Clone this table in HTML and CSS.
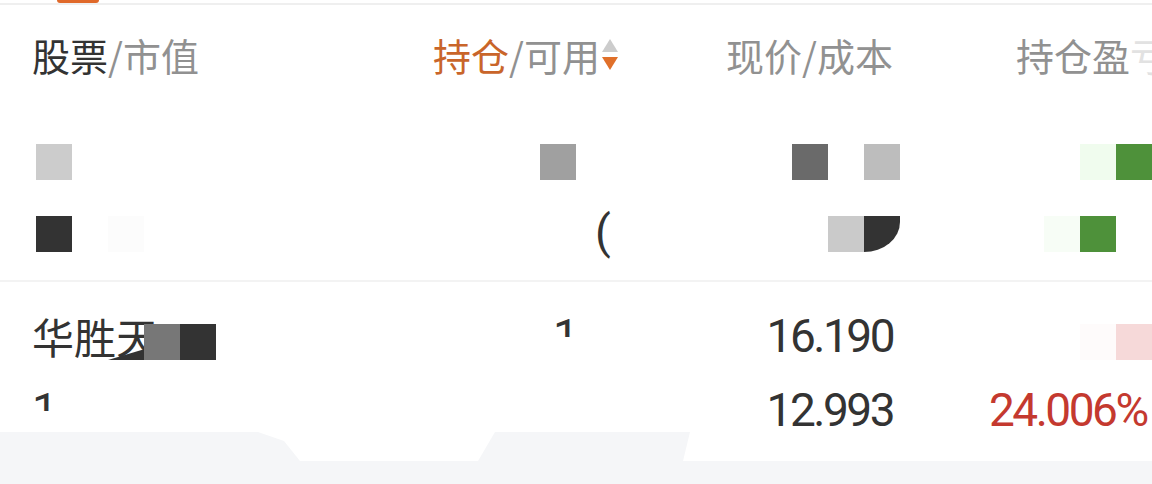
FILE: index.html
```html
<!DOCTYPE html>
<html lang="zh-CN">
<head>
<meta charset="utf-8">
<title>持仓</title>
<link rel="stylesheet" href="styles.css">
</head>
<body>
<div class="page">
  <div class="topbar"><span class="tab-ind"></span></div>
  <div class="table">
    <div class="grid head">
      <div class="c1"><span class="dark">股票</span>/市值</div>
      <div class="c2"><span class="active">持仓</span>/可用<span class="sort"><i class="up"></i><i class="down"></i></span></div>
      <div class="c3">现价/成本</div>
      <div class="c4">持仓盈<span class="fade">亏</span></div>
    </div>
    <div class="grid row first">
      <div class="c1"><div class="ln"></div><div class="ln"></div></div>
      <div class="c2"><div class="ln"></div><div class="ln num frag-paren">(</div></div>
      <div class="c3"><div class="ln"></div><div class="ln"></div></div>
      <div class="c4"><div class="ln"></div><div class="ln"></div></div>
    </div>
    <div class="grid row">
      <div class="c1"><div class="ln name">华胜天</div><div class="ln num"><span class="frag">1</span></div></div>
      <div class="c2"><div class="ln num frag-one"><span class="frag">1</span></div><div class="ln"></div></div>
      <div class="c3"><div class="ln num">16.190</div><div class="ln num">12.993</div></div>
      <div class="c4"><div class="ln"></div><div class="ln num red">24.006%</div></div>
    </div>
  </div>
  <div class="footer"></div>

  <div class="mosaic" aria-hidden="true">
    <span class="m a1"></span>
    <span class="m a2"></span>
    <span class="m a3"></span>
    <span class="m a4"></span>
    <span class="m a5"></span>
    <span class="m a6"></span>
    <span class="m b1"></span>
    <span class="m b2"></span>
    <span class="m b3"></span>
    <span class="m b4"></span>
    <span class="m b5"></span>
    <span class="m b6"></span>
    <span class="m c0"></span>
    <span class="m c1m"></span>
    <span class="m c2m"></span>
    <span class="m c3m"></span>
    <span class="m c4m"></span>
  </div>
</div>
</body>
</html>
```

FILE: styles.css
```css
* { box-sizing: border-box; margin: 0; padding: 0; }

html, body {
  width: 1152px;
  height: 484px;
  overflow: hidden;
  background: #ffffff;
}

body {
  font-family: "Noto Sans CJK SC", "Noto Sans", sans-serif;
  color: #333333;
}

.page {
  position: relative;
  width: 1152px;
  height: 484px;
  overflow: hidden;
}

.topbar {
  height: 5px;
  border-bottom: 2px solid #efefef;
}

.tab-ind {
  display: block;
  margin-left: 57px;
  width: 42px;
  height: 3px;
  background: #e0692a;
  border-radius: 0 0 3px 3px;
}

.table {
  width: 1240px;
}

.grid {
  display: grid;
  grid-template-columns: 401px 200px 260px 1fr;
  padding-left: 32px;
}

.head {
  height: 99px;
  align-items: center;
  font-size: 38px;
  color: #919191;
  line-height: 1;
}

.head .dark { color: #333333; }
.head .active { color: #c9652a; }
.head .c2 { display: flex; align-items: center; }
.head .c3 { text-align: right; }
.head .c4 { padding-left: 123px; }
.head .fade { color: #e2e2e2; }

.sort {
  display: inline-flex;
  flex-direction: column;
  gap: 5px;
  margin-left: 2px;
}
.sort i {
  display: block;
  width: 0;
  height: 0;
  border-left: 8px solid transparent;
  border-right: 8px solid transparent;
}
.sort .up { border-bottom: 13px solid #cccccc; }
.sort .down { border-top: 13px solid #e0702a; }

.row {
  padding: 17px 0 11px 32px;
  font-size: 42px;
  line-height: 74px;
}
.row.first {
  border-bottom: 2px solid #f3f3f3;
}

.ln { height: 74px; white-space: nowrap; }

.num {
  font-family: Roboto, "Noto Sans", sans-serif;
  font-size: 46px;
  letter-spacing: -2.5px;
}

.frag {
  display: inline-block;
  height: 38px;
  overflow: hidden;
  vertical-align: top;
}

.c3 .ln { text-align: right; }
.c4 { padding-left: 96px; }
.red { color: #c4392f; }

.frag-paren { padding-left: 162px; }
.frag-one { padding-left: 120px; }

.footer {
  position: relative;
  margin-top: 3px;
  height: 23px;
  background: #f5f6f8;
}
.footer::before,
.footer::after {
  content: "";
  position: absolute;
  top: -29px;
  height: 29px;
  background: #f5f6f8;
}
.footer::before {
  left: 0;
  width: 300px;
  clip-path: polygon(0 0, 258px 0, 284px 9px, 300px 29px, 0 29px);
}
.footer::after {
  left: 478px;
  width: 212px;
  clip-path: polygon(17px 0, 212px 0, 205px 29px, 0 29px);
}

/* redaction mosaic laid over the table on a 36px grid */
.mosaic {
  position: absolute;
  top: 0;
  left: 0;
  display: grid;
  grid-template-columns: repeat(32, 36px);
  grid-template-rows: repeat(14, 36px);
  pointer-events: none;
}
.m { display: block; }

.a1 { grid-area: 5 / 2; background: #cccccc; }
.a2 { grid-area: 5 / 16; background: #a0a0a0; }
.a3 { grid-area: 5 / 23; background: #6a6a6a; }
.a4 { grid-area: 5 / 25; background: #bdbdbd; }
.a5 { grid-area: 5 / 31; background: #f0fcee; }
.a6 { grid-area: 5 / 32; background: #4e913a; }

.b1 { grid-area: 7 / 2; background: #333333; }
.b2 { grid-area: 7 / 4; background: #fcfcfc; }
.b3 { grid-area: 7 / 24; background: #cacaca; }
.b4 { grid-area: 7 / 25; background: #333333; border-bottom-right-radius: 36px 30px; }
.b5 { grid-area: 7 / 30; background: #f7fdf6; }
.b6 { grid-area: 7 / 31; background: #4e913a; clip-path: polygon(0 0, 100% 0, 100% 100%, 0 100%, 0 36px, 20px 28px, 0 36px); }

.c0 { grid-area: 10 / 4; background: #333333; clip-path: polygon(100% 70%, 100% 100%, 0 100%); }
.c1m { grid-area: 10 / 5; background: #777777; }
.c2m { grid-area: 10 / 6; background: #333333; }
.c3m { grid-area: 10 / 31; background: #fefbfb; }
.c4m { grid-area: 10 / 32; background: #f6d9d9; }
```
